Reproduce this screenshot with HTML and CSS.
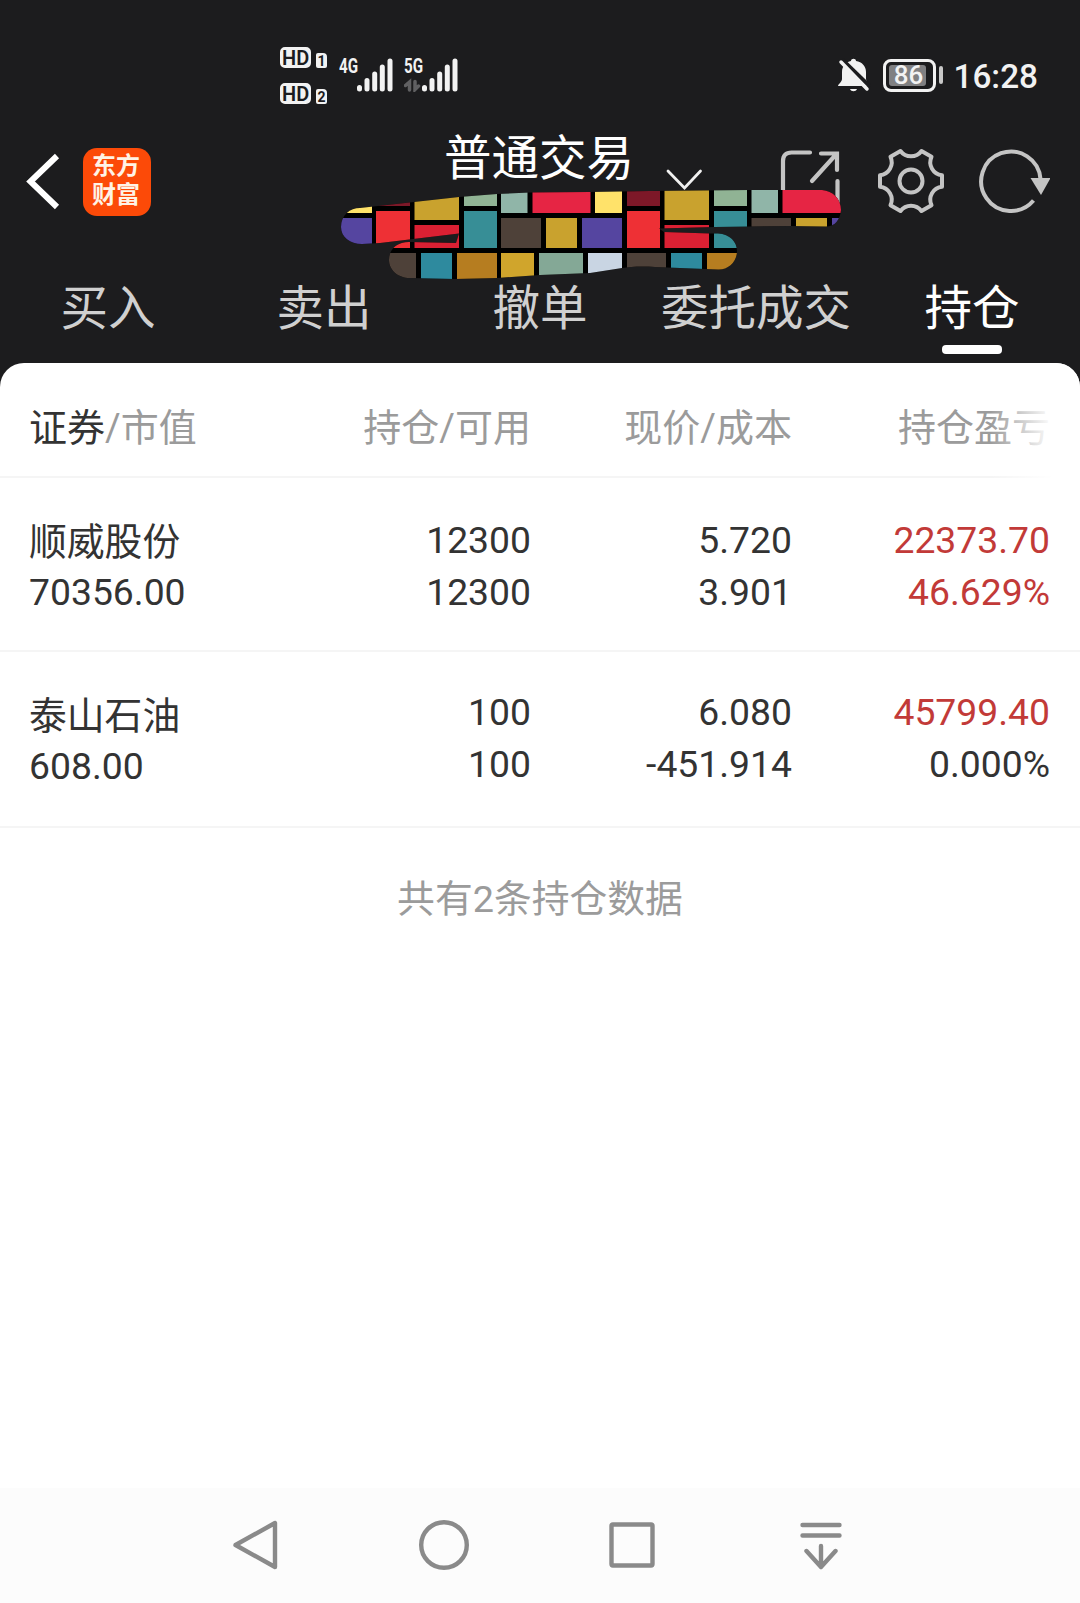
FILE: index.html
```html
<!DOCTYPE html>
<html lang="zh-CN">
<head>
  <meta charset="UTF-8" />
  <meta name="viewport" content="width=device-width, initial-scale=1.0"/>
  <title>普通交易</title>
  <link rel="stylesheet" href="styles.css">
</head>
<body>

  <header class="top">
    <div class="status">
      <div class="hd-list">
        <div class="hd"><span class="hd-box">HD</span><span class="sim">1</span></div>
        <div class="hd"><span class="hd-box">HD</span><span class="sim">2</span></div>
      </div>
      <div class="signal">
        <span class="net">4G</span>
        <svg class="bars" width="54" height="34" viewBox="0 0 54 34" stroke="#f2f2f2" stroke-width="5" stroke-linecap="round">
          <path d="M20.5 29.5v1.5M28 22.5v8.5M35.7 16v15M43.3 9v22M51 3v28"/>
        </svg>
      </div>
      <div class="signal">
        <span class="net">5G</span>
        <svg class="bars" width="54" height="34" viewBox="0 0 54 34" stroke="#f2f2f2" stroke-width="5" stroke-linecap="round">
          <path d="M20.5 29.5v1.5M28 22.5v8.5M35.7 16v15M43.3 9v22M51 3v28"/>
          <path d="M5.5 32V24L1.500 27.500M11 23.500V31.500L14.500 28" fill="none" stroke="#606062" stroke-width="3.500"/>
        </svg>
      </div>
      <div class="status-right">
        <svg class="bell" width="33" height="34" viewBox="0 0 33 34">
          <path fill="#f2f2f2" d="M0 28c0-2 4-4 4-7v-7c0-6 4-10 9-11 0-3 5-3 5 0 6 1 10 5 10 11v7c0 3 3 5 3 7zM12 31h7c-1 3-6 3-7 0z"/>
          <path d="M4 1.500L32 28.500" stroke="#1c1c1e" stroke-width="4"/>
          <path d="M3 4L29 31" stroke="#f2f2f2" stroke-width="3.500" stroke-linecap="round"/>
        </svg>
        <span class="battery"><span class="battery-fill"></span><span class="battery-num">86</span></span>
        <span class="battery-nub"></span>
        <span class="clock">16:28</span>
      </div>
    </div>

    <div class="bar">
      <svg class="back" width="40" height="60" viewBox="0 0 40 60" fill="none" stroke="#fff" stroke-width="6">
        <path d="M33 4L6.500 29.500L33 55"/>
      </svg>
      <div class="logo">东方<br>财富</div>
      <h1>普通交易</h1>
      <svg class="arrow" width="40" height="24" viewBox="0 0 40 24" fill="none" stroke="#f0f0f0" stroke-width="2.800" stroke-linecap="round">
        <path d="M4 4L20.500 21L36.500 4"/>
      </svg>
      <svg class="share" width="64" height="64" viewBox="0 0 64 64" fill="none" stroke="#c4c4c4" stroke-width="4.200" stroke-linecap="round">
        <path d="M5 60V13Q5 4.500 13.500 4.500H32M43 5.500H59V22M58 6.500L34 33M59.500 33V60"/>
      </svg>
      <svg class="gear" width="70" height="70" viewBox="-35 -35 70 70" fill="none" stroke="#c4c4c4" stroke-width="4" stroke-linejoin="round">
        <path d="M31 5.800V-5.800A13 13 0 0 1 20.500 -24.200L10.500 -30A13 13 0 0 1 -10.500 -30L-20.500 -24.200A13 13 0 0 1 -31 -5.800V5.800A13 13 0 0 1 -20.500 24.200L-10.500 30A13 13 0 0 1 10.500 30L20.500 24.200A13 13 0 0 1 31 5.800Z"/>
        <circle r="11.500"/>
      </svg>
      <svg class="refresh" width="74" height="70" viewBox="-35 -35 74 70" fill="none" stroke="#c4c4c4" stroke-width="4">
        <path d="M29.500 -2A29.700 29.700 0 1 0 22.500 19.500"/>
        <path d="M19.500 -3H39.500L30 14Z" fill="#c4c4c4" stroke="none"/>
      </svg>
    </div>

    <nav class="tabs">
      <span class="tab">买入</span>
      <span class="tab">卖出</span>
      <span class="tab">撤单</span>
      <span class="tab">委托成交</span>
      <span class="tab active">持仓</span>
    </nav>

    <!-- mosaic brush over the account number -->
    <svg class="mosaic" width="500" height="90" viewBox="341 189 500 90">
      <clipPath id="brush">
        <path d="M341 226C341 214 350 207 360 207L414 201L459 196L497 193L530 191.500L590 191L650 190L750 189H822C833 190 841 198 841 209C840 219 835 225.500 826 225.500L790 225L750 225.500L714 226L659 227.500L664 231L710 232.500H718C730 233 737 241 737 250C737 261 728 269 718 268.500L655 266C640 265 630 266 622 267L590 272L540 274L497 277L455 278L410 277C398 277 389 269 389 259C389 248 397 241 409 241L456 242L459 232.500L380 242L362 243C350 243 341 236 341 226Z"/>
      </clipPath>
      <g clip-path="url(#brush)">
        <rect x="341" y="189" width="500" height="90" fill="#000"/>
        <path fill="#ffe26a" d="M341 200h31v12h-31zM595 190h27v22h-27z"/>
        <path fill="#5545a0" d="M341 217h31v30h-31zM582 217h40v30h-40zM832 217h9v10h-9z"/>
        <path fill="#7d1828" d="M376 200h34v5h-34zM627 190h33v15h-33z"/>
        <path fill="#ee3035" d="M376 210h34v37h-34zM627 210h33v37h-33z"/>
        <path fill="#c9a22e" d="M414.500 190h44.500v29h-44.500zM664.500 189h44.500v30h-44.500zM546 217h31v30h-31zM796 217h31v10h-31z"/>
        <path fill="#da2033" d="M414.500 224h44.500v23h-44.500zM664.500 224h44.500v23h-44.500z"/>
        <path fill="#90b394" d="M464 190h33v15h-33zM714 189h33v16h-33z"/>
        <path fill="#378e96" d="M464 210h33v37h-33zM714 210h33v37h-33z"/>
        <path fill="#90b5a8" d="M501 190h26.500v22h-26.500zM751.500 189h26.500v23h-26.500z"/>
        <path fill="#4e4139" d="M501 217h40v30h-40zM751.500 217h39.500v10h-39.500zM389 252h27v27h-27zM627 252h39v27h-39z"/>
        <path fill="#e62544" d="M532.500 190h58v22h-58zM782.500 189h58.500v23h-58.500z"/>
        <path fill="#2e8a9e" d="M421 252h31v27h-31zM671 252h31v27h-31z"/>
        <path fill="#b67d20" d="M457 252h40v27h-40zM707 252h30v27h-30z"/>
        <path fill="#d0a52c" d="M501 252h33v27h-33z"/>
        <path fill="#84a896" d="M539 252h44v27h-44z"/>
        <path fill="#c9d5e3" d="M588 252h34v27h-34z"/>
      </g>
    </svg>
  </header>

  <main class="card">
    <div class="row head">
      <div><b>证券</b>/市值</div>
      <div>持仓/可用</div>
      <div>现价/成本</div>
      <div>持仓盈亏</div>
    </div>
    <div class="row">
      <div><span class="name">顺威股份</span>70356.00</div>
      <div>12300<br>12300</div>
      <div>5.720<br>3.901</div>
      <div class="up">22373.70<br>46.629%</div>
    </div>
    <div class="row last">
      <div><span class="name">泰山石油</span>608.00</div>
      <div>100<br>100</div>
      <div>6.080<br>-451.914</div>
      <div><span class="up">45799.40</span><br>0.000%</div>
    </div>
    <p class="total">共有2条持仓数据</p>
  </main>

  <footer class="navbar">
    <svg width="60" height="60" viewBox="0 0 60 60"><path d="M49 8V52L9.500 30Z"/></svg>
    <svg width="60" height="60" viewBox="0 0 60 60"><circle cx="30" cy="30" r="22.800"/></svg>
    <svg width="60" height="60" viewBox="0 0 60 60"><rect x="9.500" y="9.500" width="41" height="41" rx="1.500"/></svg>
    <svg width="60" height="60" viewBox="0 0 60 60"><path d="M12.500 10H49.500M12.500 20.500H49.500M31 31V52M16.500 36L31 52L45.500 36"/></svg>
  </footer>

</body>
</html>
```

FILE: styles.css
```css
body {
  margin: 0;
  height: 1603px;
  display: flex;
  flex-direction: column;
  background: #1c1c1e;
  font-family: Roboto, "Noto Sans CJK SC", sans-serif;
  color: #333;
}
svg {
  display: block;
  flex: none;
}
.top {
  position: relative;
  height: 363px;
  color: #fff;
}

/* status bar */
.status {
  display: flex;
  align-items: flex-start;
  height: 120px;
  padding-left: 280px;
  box-sizing: border-box;
  color: #f2f2f2;
}
.hd-list {
  width: 59px;
  padding-top: 47px;
}
.hd {
  display: flex;
  align-items: flex-end;
  gap: 5px;
  height: 21px;
  margin-bottom: 15px;
}
.hd-box {
  box-sizing: border-box;
  width: 31px;
  height: 21px;
  border: 2px solid #f2f2f2;
  border-radius: 5px;
  background: #f2f2f2;
  color: #1c1c1e;
  font-size: 20px;
  font-weight: 600;
  line-height: 18px;
  text-align: center;
}
.sim {
  width: 11px;
  height: 15px;
  border-radius: 2px 4px 2px 2px;
  background: #f2f2f2;
  color: #1c1c1e;
  font-size: 14px;
  font-weight: 700;
  line-height: 16px;
  text-align: center;
}
.signal {
  display: flex;
  width: 65px;
  padding-top: 58px;
}
.net {
  width: 0;
  font-size: 20px;
  font-weight: 700;
  line-height: 16px;
  white-space: nowrap;
  transform: scaleX(0.76);
}
.status-right {
  display: flex;
  align-items: center;
  margin-left: auto;
  padding: 58px 42px 0 0;
  height: 34px;
}
.battery {
  position: relative;
  box-sizing: border-box;
  width: 53px;
  height: 33px;
  margin-left: 12px;
  border: 3px solid #f2f2f2;
  border-radius: 8px;
}
.battery-fill {
  position: absolute;
  left: 3px;
  top: 3px;
  width: 37px;
  height: 21px;
  border-radius: 3px;
  background: #808082;
}
.battery-num {
  position: absolute;
  left: 0;
  width: 46px;
  font-size: 26px;
  font-weight: 500;
  line-height: 27px;
  text-align: center;
}
.battery-nub {
  width: 4px;
  height: 18px;
  margin: 0 11px 0 3px;
  border-radius: 2px;
  background: #c8c8c8;
}
.clock {
  padding-top: 4px;
  font-size: 33.3px;
  font-weight: 500;
  line-height: 34px;
}

/* title bar */
.bar {
  display: flex;
  align-items: flex-start;
  height: 152px;
  padding-left: 24px;
}
.back {
  margin-top: 32px;
}
.logo {
  width: 68px;
  height: 68px;
  box-sizing: border-box;
  margin: 28px 0 0 19px;
  padding: 4px 2px 0 0;
  border-radius: 14px;
  background: #fc4a08;
  color: #fff3e6;
  font-size: 24px;
  font-weight: 700;
  line-height: 29px;
  text-align: center;
}
h1 {
  width: 190px;
  margin: 5px 0 0 293px;
  font-size: 47.5px;
  font-weight: 400;
  line-height: 68px;
}
.arrow {
  margin: 47px 0 0 30px;
}
.share {
  margin: 28px 0 0 74px;
}
.gear {
  margin: 26px 0 0 33.5px;
}
.refresh {
  margin: 26px 0 0 30.5px;
}

.tabs {
  display: flex;
}
.tab {
  flex: 1 0 0;
  padding-top: 2px;
  color: #d0d0d0;
  font-size: 47.5px;
  line-height: 71px;
  text-align: center;
}
.tab.active {
  color: #fff;
}
.tab.active::after {
  content: "";
  display: block;
  width: 60px;
  height: 9px;
  margin: 0 auto;
  border-radius: 4px;
  background: #fff;
}
.mosaic {
  position: absolute;
  left: 341px;
  top: 189.5px;
}

/* holdings */
.card {
  flex: 1;
  border-radius: 24px 24px 0 0;
  background: #fff;
  font-size: 37.3px;
  overflow: hidden;
}
.row {
  display: grid;
  grid-template-columns: 250px 252px 261px 258px;
  box-sizing: border-box;
  height: 174px;
  padding: 36px 29px 0;
  border-bottom: 2px solid #f5f5f5;
  line-height: 52px;
  text-align: right;
}
.row > div:first-child {
  text-align: left;
}
.head {
  position: relative;
  height: 115px;
  padding-top: 39px;
  color: #9b9b9b;
  font-size: 38px;
}
.head b {
  color: #333;
  font-weight: 400;
}
.head::after {
  content: "";
  position: absolute;
  top: 0;
  right: 0;
  bottom: -2px;
  width: 90px;
  background: linear-gradient(to right, rgba(255, 255, 255, 0), #fff 70%);
}
.name {
  display: block;
  padding-top: 4px;
  font-size: 37.8px;
  line-height: 48px;
}
.last {
  height: 176px;
  padding-top: 34px;
}
.last > div:first-child {
  padding-top: 2px;
}
.up {
  color: #c23a38;
}
.total {
  margin: 45px 0 0;
  color: #9b9b9b;
  font-size: 37.8px;
  line-height: 52px;
  text-align: center;
}

.navbar {
  display: flex;
  justify-content: center;
  gap: 128px;
  box-sizing: border-box;
  height: 115px;
  padding: 27px 4px 0 0;
  background: #fcfcfc;
}
.navbar svg {
  fill: none;
  stroke: #8a8a8a;
  stroke-width: 4.400;
  stroke-linecap: round;
  stroke-linejoin: round;
}
```
